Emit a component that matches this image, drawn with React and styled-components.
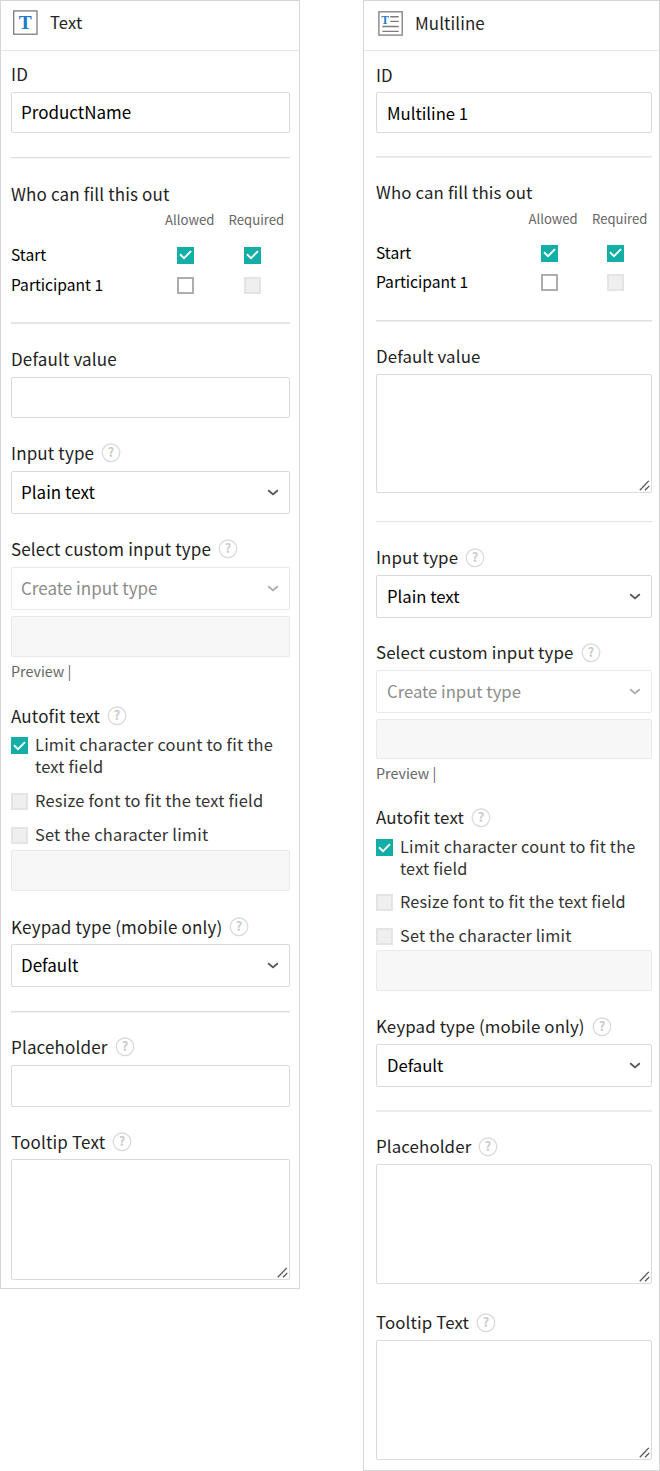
import React from "react";
import styled, { createGlobalStyle, ThemeProvider } from "styled-components";

const GlobalStyle = createGlobalStyle`
  *, *::before, *::after { box-sizing: border-box; }
  body {
    margin: 0;
    background: #fff;
    font-family: "Noto Sans CJK SC", "Noto Sans", sans-serif;
    font-size: 16px;
    color: #232323;
  }
`;

const textTheme = {
  title: 16.6, label: 17, spacing: 0.15, value: 17, option: 16.45, column: 13.2, inset: 9, labelShift: 2, helpShift: 0,
};
const multilineTheme = {
  title: 16.9, label: 16.85, spacing: 0.12, value: 16.7, option: 16.25, column: 13.1, inset: 10, labelShift: 0, helpShift: 2,
};

const Page = styled.main`
  display: flex;
  align-items: flex-start;
  justify-content: space-between;
  width: 660px;
  height: 1471px;
`;

const Panel = styled.section`
  width: ${(p) => p.$width}px;
  height: ${(p) => p.$height}px;
  border: 1px solid #d6d6d6;
`;

const Header = styled.header`
  display: flex;
  align-items: center;
  gap: 12px;
  height: 50px;
  padding: 0 0 ${(p) => p.$lift}px ${(p) => p.$left}px;
  border-bottom: 1px solid #e6e6e6;
`;

const Title = styled.h1`
  margin: 0;
  padding-bottom: 2px;
  font-size: ${(p) => p.theme.title}px;
  font-weight: 400;
  line-height: 24px;
  letter-spacing: 0.1px;
`;

const Body = styled.div`
  display: flex;
  flex-direction: column;
  padding: 0 ${(p) => p.$right}px 0 ${(p) => p.$left}px;
`;

const LabelRow = styled.div`
  display: flex;
  align-items: center;
  gap: 7px;
  height: 24px;
  margin-top: ${(p) => p.$top}px;
  padding-top: ${(p) => p.theme.labelShift}px;
  font-size: ${(p) => p.theme.label}px;
  line-height: 24px;
  white-space: nowrap;
  letter-spacing: ${(p) => p.theme.spacing}px;
`;

const Box = styled.div`
  display: flex;
  align-items: center;
  justify-content: space-between;
  height: ${(p) => p.$height}px;
  margin-top: ${(p) => p.$top}px;
  padding: 0 10px 0 ${(p) => p.theme.inset}px;
  border: 1px solid ${(p) => (p.$disabled ? "#e9e9e9" : "#dadada")};
  border-radius: 2px;
  background: ${(p) => (p.$filled ? "#f7f7f7" : "#fff")};
  color: ${(p) => (p.$disabled ? "#8c8c8c" : "#000")};
  font-size: ${(p) => p.theme.value}px;
  line-height: 24px;
  white-space: nowrap;
`;

const Value = styled.span`
  padding-bottom: ${(p) => p.$lift ?? 2}px;
`;

const TextArea = styled(Box)`
  align-items: flex-end;
  justify-content: flex-end;
  padding: 0 1px 1px 0;
`;

const Divider = styled.hr`
  width: 100%;
  height: 2px;
  margin: ${(p) => p.$top}px 0 0;
  border: 0;
  border-top: 1px solid ${(p) => p.$a};
  border-bottom: 1px solid ${(p) => p.$b};
`;

const FillRow = styled.div`
  display: grid;
  grid-template-columns: ${(p) => p.$first}px 63.5px 1fr;
  align-items: center;
  height: ${(p) => p.$height}px;
  margin-top: ${(p) => p.$top}px;
  color: #000;
  white-space: nowrap;
`;

const ColumnName = styled.span`
  color: #666;
  font-size: ${(p) => p.theme.column}px;
  line-height: 18px;
`;

const RoleName = styled.span`
  padding-bottom: 2px;
  font-size: 15.6px;
  line-height: 24px;
`;

const Cell = styled.span`
  display: flex;
  padding-left: ${(p) => p.$inset}px;
`;

const borders = { on: "0", off: "2px solid #adadad", disabled: "2px solid #e4e4e4" };
const fills = { on: "#13aea5", off: "#fff", disabled: "#efefef" };

const CheckBox = styled.span`
  display: flex;
  flex: none;
  align-items: center;
  justify-content: center;
  width: 17px;
  height: 17px;
  border: ${(p) => borders[p.$state]};
  background: ${(p) => fills[p.$state]};
`;

const Option = styled.div`
  display: flex;
  gap: 7px;
  height: ${(p) => p.$height}px;
  margin-top: ${(p) => p.$top}px;
  color: #333;
  font-size: ${(p) => p.theme.option}px;
`;

const OptionText = styled.span`
  margin-top: -4px;
  line-height: 22px;
  letter-spacing: 0.2px;
  white-space: nowrap;
`;

const Preview = styled.div`
  height: 20px;
  margin-top: ${(p) => p.$top}px;
  color: #666;
  font-size: 14.3px;
  line-height: 20px;
`;

const Glyph = styled.svg`
  display: block;
  flex: none;
`;

const HelpGlyph = styled(Glyph)`
  margin-top: ${(p) => p.theme.helpShift}px;
`;

const SerifMark = styled.text`
  fill: #1b7bc8;
  font-family: "Liberation Serif", serif;
  font-weight: 700;
  text-anchor: middle;
`;

const HelpMark = styled.text`
  fill: #cbcbcb;
  font-size: 12.5px;
  font-weight: 700;
  letter-spacing: 0;
  text-anchor: middle;
`;

const TextIcon = () => (
  <Glyph width="25" height="25" viewBox="0 0 25 25">
    <rect x="0.7" y="0.9" width="23.3" height="23.3" fill="#fff" stroke="#7d7d7d" strokeWidth="1.3" />
    <SerifMark x="12.2" y="18.6" fontSize="19.5">T</SerifMark>
  </Glyph>
);

const MultilineIcon = () => (
  <Glyph width="25" height="25" viewBox="0 0 25 25">
    <rect x="0.9" y="0.8" width="23.3" height="23.3" fill="#fff" stroke="#7d7d7d" strokeWidth="1.3" />
    <SerifMark x="7.2" y="12.7" fontSize="11.5">T</SerifMark>
    <path d="M12.3 5.8h8.4M12.3 10.4h8.4M4.3 15.5h16.4M4.3 20.4h16.4" stroke="#7d7d7d" strokeWidth="1.4" />
  </Glyph>
);

const Help = () => (
  <HelpGlyph width="20" height="20" viewBox="0 0 20 20">
    <circle cx="10" cy="9.8" r="8.8" fill="#fff" stroke="#dadada" strokeWidth="1.3" />
    <HelpMark x="10" y="14.4">?</HelpMark>
  </HelpGlyph>
);

const Tick = () => (
  <svg width="13" height="10" viewBox="0 0 13 10" fill="none">
    <path d="M1 4.3 5 8.2 12 1.2" stroke="#fff" strokeWidth="1.9" />
  </svg>
);

const Check = ({ state }) => <CheckBox $state={state}>{state === "on" && <Tick />}</CheckBox>;

const Chevron = ({ color }) => (
  <svg width="12" height="8" viewBox="0 0 12 8" fill="none">
    <path d="M1.2 1.3 6 5.4 10.8 1.3" stroke={color} strokeWidth="1.8" />
  </svg>
);

const Grip = () => (
  <svg width="11" height="11" viewBox="0 0 11 11" fill="none" stroke="#555" strokeWidth="1.3">
    <path d="M0.8 10.3 9.8 0.9M6 10.3 10.3 5.9" />
  </svg>
);

const Label = ({ children, help, top }) => (
  <LabelRow $top={top}>
    <span>{children}</span>
    {help && <Help />}
  </LabelRow>
);

const Select = ({ value, disabled, top }) => (
  <Box $top={top} $height={43} $disabled={disabled}>
    <Value>{value}</Value>
    <Chevron color={disabled ? "#aaa" : "#555"} />
  </Box>
);

const Area = ({ top, height }) => (
  <TextArea $top={top} $height={height}>
    <Grip />
  </TextArea>
);

const Permissions = ({ tops, first, insets }) => (
  <>
    <FillRow $first={first} $height={18} $top={tops[0]}>
      <span />
      <ColumnName>Allowed</ColumnName>
      <ColumnName>Required</ColumnName>
    </FillRow>
    <FillRow $first={first} $height={17} $top={tops[1]}>
      <RoleName>Start</RoleName>
      <Cell $inset={insets[0]}><Check state="on" /></Cell>
      <Cell $inset={insets[1]}><Check state="on" /></Cell>
    </FillRow>
    <FillRow $first={first} $height={17} $top={tops[2]}>
      <RoleName>Participant 1</RoleName>
      <Cell $inset={insets[0]}><Check state="off" /></Cell>
      <Cell $inset={insets[1]}><Check state="disabled" /></Cell>
    </FillRow>
  </>
);

const Autofit = ({ tops }) => (
  <>
    <Option $top={tops[0]} $height={41}>
      <Check state="on" />
      <OptionText>Limit character count to fit the<br />text field</OptionText>
    </Option>
    <Option $top={tops[1]} $height={17}>
      <Check state="disabled" />
      <OptionText>Resize font to fit the text field</OptionText>
    </Option>
    <Option $top={tops[2]} $height={17}>
      <Check state="disabled" />
      <OptionText>Set the character limit</OptionText>
    </Option>
  </>
);

const TextPanel = () => (
  <Panel $width={300} $height={1289}>
    <Header $left={12} $lift={6}>
      <TextIcon />
      <Title>Text</Title>
    </Header>
    <Body $left={10} $right={9}>
      <Label top={10}>ID</Label>
      <Box $top={7} $height={41}><Value $lift={1}>ProductName</Value></Box>
      <Divider $top={24} $a="#dedede" $b="#f4f4f4" />
      <Label top={22}>Who can fill this out</Label>
      <Permissions tops={[6, 13, 13]} first={154} insets={[12, 15.5]} />
      <Divider $top={33} $a="#e6e6e6" $b="#e6e6e6" />
      <Label top={22}>Default value</Label>
      <Box $top={7} $height={41} />
      <Label top={22} help>Input type</Label>
      <Select top={7} value="Plain text" />
      <Label top={22} help>Select custom input type</Label>
      <Select top={7} value="Create input type" disabled />
      <Box $top={6} $height={41} $disabled $filled />
      <Preview $top={4}>Preview |</Preview>
      <Label top={22} help>Autofit text</Label>
      <Autofit tops={[10, 15, 17]} />
      <Box $top={6} $height={41} $disabled $filled />
      <Label top={23} help>Keypad type (mobile only)</Label>
      <Select top={6} value="Default" />
      <Divider $top={24} $a="#dedede" $b="#f0f0f0" />
      <Label top={21} help>Placeholder</Label>
      <Box $top={7} $height={42} />
      <Label top={22} help>Tooltip Text</Label>
      <Area top={6} height={121} />
    </Body>
  </Panel>
);

const MultilinePanel = () => (
  <Panel $width={297} $height={1471}>
    <Header $left={14} $lift={4}>
      <MultilineIcon />
      <Title>Multiline</Title>
    </Header>
    <Body $left={12} $right={7}>
      <Label top={12}>ID</Label>
      <Box $top={5} $height={41}><Value $lift={0}>Multiline 1</Value></Box>
      <Divider $top={23} $a="#e6e6e6" $b="#f0f0f0" />
      <Label top={22}>Who can fill this out</Label>
      <Permissions tops={[6, 12, 12]} first={152.5} insets={[12.5, 15]} />
      <Divider $top={34} $a="#e0e0e0" $b="#ececec" />
      <Label top={22}>Default value</Label>
      <Area top={6} height={119} />
      <Divider $top={28} $a="#e4e4e4" $b="#fbfbfb" />
      <Label top={22} help>Input type</Label>
      <Select top={6} value="Plain text" />
      <Label top={22} help>Select custom input type</Label>
      <Select top={6} value="Create input type" disabled />
      <Box $top={6} $height={40} $disabled $filled />
      <Preview $top={4}>Preview |</Preview>
      <Label top={22} help>Autofit text</Label>
      <Autofit tops={[10, 14, 17]} />
      <Box $top={5} $height={41} $disabled $filled />
      <Label top={23} help>Keypad type (mobile only)</Label>
      <Select top={6} value="Default" />
      <Divider $top={23} $a="#ebebeb" $b="#ebebeb" />
      <Label top={22} help>Placeholder</Label>
      <Area top={6} height={120} />
      <Label top={26} help>Tooltip Text</Label>
      <Area top={6} height={120} />
    </Body>
  </Panel>
);

export default function App() {
  return (
    <>
      <GlobalStyle />
      <Page>
        <ThemeProvider theme={textTheme}>
          <TextPanel />
        </ThemeProvider>
        <ThemeProvider theme={multilineTheme}>
          <MultilinePanel />
        </ThemeProvider>
      </Page>
    </>
  );
}
